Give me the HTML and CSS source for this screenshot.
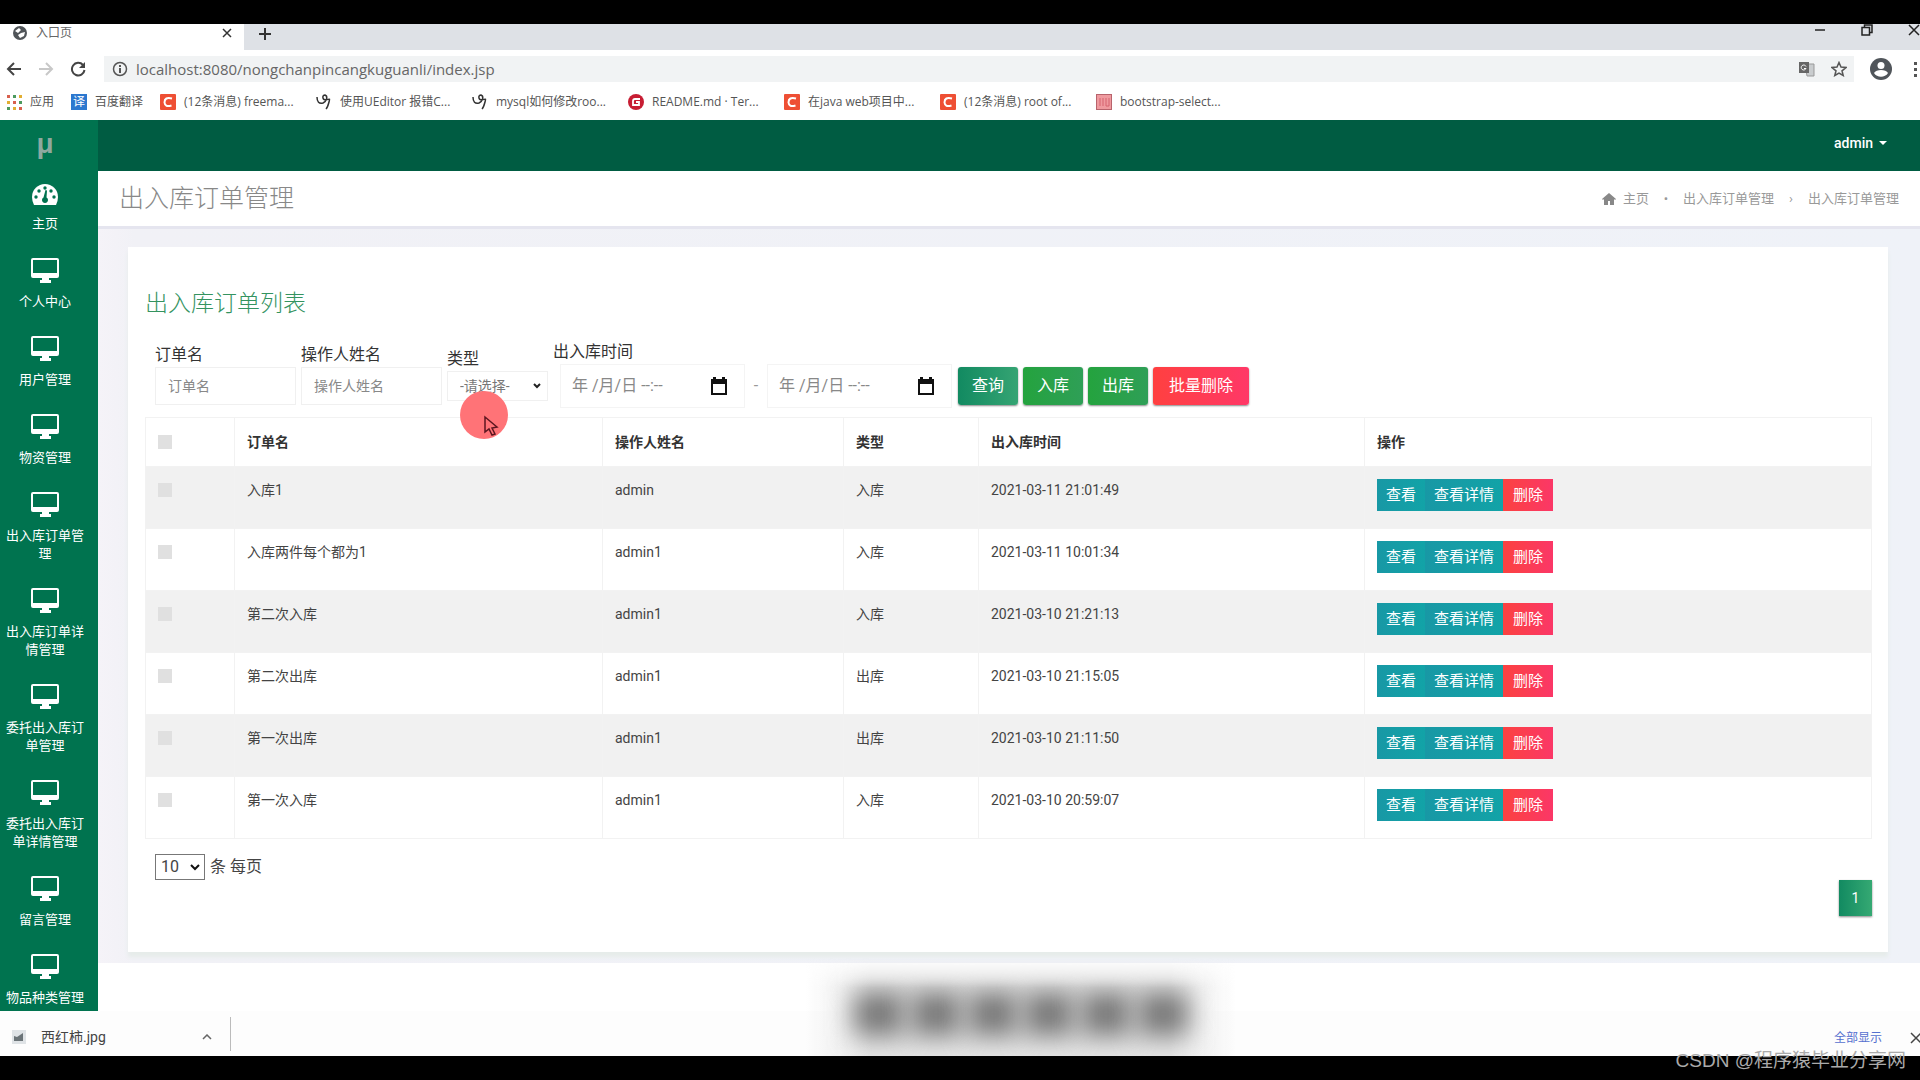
FILE: index.html
```html
<!DOCTYPE html>
<html lang="zh-CN">
<head>
<meta charset="utf-8">
<title>入口页</title>
<link rel="stylesheet" href="styles.css">
</head>
<body>
<svg class="defs" aria-hidden="true">
  <symbol id="monitor" viewBox="0 0 28 26"><path fill="currentColor" fill-rule="evenodd" d="M2 1h24a2 2 0 0 1 2 2v16a2 2 0 0 1-2 2h-8v2h2v3H9v-3h2v-2H2a2 2 0 0 1-2-2V3a2 2 0 0 1 2-2zm0 2v13h24V3z"/></symbol>
  <symbol id="calendar" viewBox="0 0 16 18"><path fill="#111" fill-rule="evenodd" d="M2 2V0h3v2h6V0h3v2h2v16H0V2zm0 5v9h12V7z"/></symbol>
  <symbol id="letter-c" viewBox="0 0 16 16"><rect width="16" height="16" rx="1" fill="#ee4f34"/><path d="M12 4.500Q4.500 2.500 4.500 8.500Q5 13.500 11.500 11.500" fill="none" stroke="#fff" stroke-width="2"/></symbol>
  <symbol id="swirl" viewBox="0 0 16 16"><path d="M1 3c0 5 2 7 6 6 4-2 5-7 2-8-3 0-3 5 1 5 4-1 4-2 3 2-1 4-2 6-3 7" fill="none" stroke="#333" stroke-width="1.500"/></symbol>
</svg>

<div class="band"></div>

<header class="browser">
  <div class="tabs">
    <div class="tab">
      <svg width="16" height="16" viewBox="0 0 16 16"><circle cx="8" cy="8" r="7" fill="#505458"/><path d="M3 6l4-3 2 2-3 3zM9 8l4-1-1 4-4 2-2-3z" fill="#fff"/></svg>
      <span class="tab-name">入口页</span>
      <button class="plain" aria-label="关闭标签"><svg width="10" height="10" viewBox="0 0 10 10"><path d="M1 1l8 8M9 1L1 9" stroke="#333" stroke-width="1.500"/></svg></button>
    </div>
    <button class="plain new-tab" aria-label="新标签"><svg width="14" height="14" viewBox="0 0 14 14"><path d="M7 1v12M1 7h12" stroke="#333" stroke-width="2"/></svg></button>
    <div class="window-buttons">
      <button class="plain" aria-label="最小化"><svg width="12" height="12" viewBox="0 0 12 12"><path d="M1 6h10" stroke="#222" stroke-width="1.500"/></svg></button>
      <button class="plain" aria-label="还原"><svg width="12" height="12" viewBox="0 0 12 12"><path d="M1 3.500h7.500V11H1zM3.500 3V1H11v7.500H9" fill="none" stroke="#222" stroke-width="1.500"/></svg></button>
      <button class="plain" aria-label="关闭"><svg width="12" height="12" viewBox="0 0 12 12"><path d="M1 1l10 10M11 1L1 11" stroke="#222" stroke-width="1.500"/></svg></button>
    </div>
  </div>
  <div class="toolbar">
    <button class="plain" aria-label="后退"><svg width="16" height="16" viewBox="0 0 16 16"><path d="M15 8H2M8 2L2 8l6 6" fill="none" stroke="#444" stroke-width="2"/></svg></button>
    <button class="plain" aria-label="前进"><svg width="16" height="16" viewBox="0 0 16 16"><path d="M1 8h13M8 2l6 6-6 6" fill="none" stroke="#c8c8c8" stroke-width="2"/></svg></button>
    <button class="plain" aria-label="刷新"><svg width="16" height="16" viewBox="0 0 16 16"><path d="M13 4a6.300 6.300 0 1 0 1.500 5" fill="none" stroke="#444" stroke-width="2"/><path d="M15 1v6H9z" fill="#444"/></svg></button>
    <div class="address">
      <svg width="16" height="16" viewBox="0 0 16 16"><circle cx="8" cy="8" r="6.500" fill="none" stroke="#555" stroke-width="1.500"/><path d="M8 7v5M8 4v2" stroke="#555" stroke-width="2"/></svg>
      <input class="url" aria-label="地址" value="localhost:8080/nongchanpincangkuguanli/index.jsp">
      <svg width="16" height="16" viewBox="0 0 16 16"><path d="M6 3h9v12H8z" fill="#c9ccce" stroke="#999"/><rect x="0" y="1" width="10" height="11" fill="#666"/><path d="M7 5.500a2.500 2.500 0 1 0 0 2H5" stroke="#fff" fill="none"/></svg>
      <svg width="16" height="16" viewBox="0 0 16 16"><path d="M8 1.500l2 4.500 5 .5-4 3.300 1.200 4.700L8 12l-4.200 2.500L5 9.800 1 6.500 6 6z" fill="none" stroke="#555" stroke-width="1.500"/></svg>
    </div>
    <svg width="22" height="22" viewBox="0 0 22 22"><circle cx="11" cy="11" r="11" fill="#50555a"/><circle cx="11" cy="7.500" r="3.500" fill="#fff"/><path d="M4 15c2-4 12-4 14 0-3 5-11 5-14 0z" fill="#fff"/></svg>
    <svg class="dots" width="4" height="16" viewBox="0 0 4 16"><path d="M0 1h3v3H0zM0 7h3v3H0zM0 13h3v3H0z" fill="#555"/></svg>
  </div>
  <nav class="bookmarks">
    <a href="#" class="apps"><svg width="16" height="16" viewBox="0 0 16 16"><path d="M1 1h3v3H1zM7 7h3v3H7zM13 13h3v3h-3z" fill="#d8604e"/><path d="M7 1h3v3H7zM13 7h3v3h-3zM1 13h3v3H1z" fill="#4c9a5e"/><path d="M13 1h3v3h-3zM1 7h3v3H1zM7 13h3v3H7z" fill="#e2ae32"/></svg>应用</a>
    <a href="#" class="fanyi"><span class="yi">译</span>百度翻译</a>
    <a href="#"><svg width="16" height="16"><use href="#letter-c"/></svg>(12条消息) freema...</a>
    <a href="#"><svg width="16" height="16"><use href="#swirl"/></svg>使用UEditor 报错C...</a>
    <a href="#"><svg width="16" height="16"><use href="#swirl"/></svg>mysql如何修改roo...</a>
    <a href="#"><svg width="16" height="16" viewBox="0 0 16 16"><circle cx="8" cy="8" r="8" fill="#c71d33"/><path d="M12 5H7Q5 5 5 7v4h6V8H8" fill="none" stroke="#fff" stroke-width="1.800"/></svg>README.md · Ter...</a>
    <a href="#"><svg width="16" height="16"><use href="#letter-c"/></svg>在java web项目中...</a>
    <a href="#"><svg width="16" height="16"><use href="#letter-c"/></svg>(12条消息) root of...</a>
    <a href="#"><svg width="16" height="16" viewBox="0 0 16 16"><rect x=".5" y=".5" width="15" height="15" fill="#ef9a9f" stroke="#b8636c"/><path d="M4 4v8M7 4v8M10 4v8h3V4" fill="none" stroke="#d5636e"/></svg>bootstrap-select...</a>
  </nav>
</header>

<div class="app">
  <aside class="sidebar">
    <div class="logo">μ</div>
    <nav class="menu">
      <a href="#"><svg width="28" height="26" viewBox="0 0 28 26"><path fill="#fff" fill-rule="evenodd" d="M14 5A13 13 0 0 0 1 18q0 4 2 8h22q2-4 2-8A13 13 0 0 0 14 5z"/><g fill="#00734f"><circle cx="14" cy="9" r="1.700"/><circle cx="8" cy="12" r="1.700"/><circle cx="20" cy="12" r="1.700"/><circle cx="5" cy="18" r="1.700"/><circle cx="23" cy="18" r="1.700"/><path d="M14.500 11l1.500.5-.5 7a3 3 0 1 1-3 0z"/></g></svg><span>主页</span></a>
      <a href="#"><svg width="28" height="26"><use href="#monitor"/></svg><span>个人中心</span></a>
      <a href="#"><svg width="28" height="26"><use href="#monitor"/></svg><span>用户管理</span></a>
      <a href="#"><svg width="28" height="26"><use href="#monitor"/></svg><span>物资管理</span></a>
      <a href="#"><svg width="28" height="26"><use href="#monitor"/></svg><span>出入库订单管理</span></a>
      <a href="#"><svg width="28" height="26"><use href="#monitor"/></svg><span>出入库订单详情管理</span></a>
      <a href="#"><svg width="28" height="26"><use href="#monitor"/></svg><span>委托出入库订单管理</span></a>
      <a href="#"><svg width="28" height="26"><use href="#monitor"/></svg><span>委托出入库订单详情管理</span></a>
      <a href="#"><svg width="28" height="26"><use href="#monitor"/></svg><span>留言管理</span></a>
      <a href="#"><svg width="28" height="26"><use href="#monitor"/></svg><span>物品种类管理</span></a>
    </nav>
  </aside>

  <div class="page">
    <div class="topbar"><button class="user">admin<i class="caret"></i></button></div>
    <div class="page-head">
      <h1>出入库订单管理</h1>
      <nav class="crumbs">
        <a href="#"><svg width="14" height="12" viewBox="0 0 14 12"><path d="M7 0l7 6-1 1-1-1v6H8V8H6v4H2V6L1 7 0 6z" fill="#888"/></svg>主页</a>
        <span class="sep">•</span>
        <a href="#">出入库订单管理</a>
        <span class="sep">›</span>
        <span>出入库订单管理</span>
      </nav>
    </div>

    <main class="content">
      <section class="card">
        <h2>出入库订单列表</h2>
        <form class="filters">
          <div class="field"><label for="order">订单名</label><input id="order" class="control" placeholder="订单名"></div>
          <div class="field"><label for="operator">操作人姓名</label><input id="operator" class="control" placeholder="操作人姓名"></div>
          <div class="field kind"><label for="kind">类型</label><div class="pick"><select id="kind"><option>-请选择-</option></select><svg width="8" height="6" viewBox="0 0 8 6"><path d="M1 1l3 3 3-3" fill="none" stroke="#222" stroke-width="2"/></svg></div></div>
          <div class="field dates">
            <label for="from">出入库时间</label>
            <div class="range">
              <div class="date"><input id="from" placeholder="年 /月/日 --:--"><button type="button" class="plain" aria-label="选择日期"><svg width="16" height="18"><use href="#calendar"/></svg></button></div>
              <span class="dash">-</span>
              <div class="date"><input aria-label="结束时间" placeholder="年 /月/日 --:--"><button type="button" class="plain" aria-label="选择日期"><svg width="16" height="18"><use href="#calendar"/></svg></button></div>
            </div>
          </div>
          <div class="actions">
            <button type="button" class="btn teal">查询</button>
            <button type="button" class="btn green">入库</button>
            <button type="button" class="btn green">出库</button>
            <button type="button" class="btn red wide">批量删除</button>
          </div>
        </form>

        <table class="orders">
          <colgroup><col class="c-tick"><col class="c-name"><col class="c-user"><col class="c-kind"><col class="c-time"><col class="c-ops"></colgroup>
          <thead>
            <tr><th><input type="checkbox" aria-label="全选"></th><th>订单名</th><th>操作人姓名</th><th>类型</th><th>出入库时间</th><th>操作</th></tr>
          </thead>
          <tbody>
            <tr><td><input type="checkbox" aria-label="选择"></td><td>入库1</td><td>admin</td><td>入库</td><td>2021-03-11 21:01:49</td><td><div class="ops"><button>查看</button><button>查看详情</button><button class="del">删除</button></div></td></tr>
            <tr><td><input type="checkbox" aria-label="选择"></td><td>入库两件每个都为1</td><td>admin1</td><td>入库</td><td>2021-03-11 10:01:34</td><td><div class="ops"><button>查看</button><button>查看详情</button><button class="del">删除</button></div></td></tr>
            <tr><td><input type="checkbox" aria-label="选择"></td><td>第二次入库</td><td>admin1</td><td>入库</td><td>2021-03-10 21:21:13</td><td><div class="ops"><button>查看</button><button>查看详情</button><button class="del">删除</button></div></td></tr>
            <tr><td><input type="checkbox" aria-label="选择"></td><td>第二次出库</td><td>admin1</td><td>出库</td><td>2021-03-10 21:15:05</td><td><div class="ops"><button>查看</button><button>查看详情</button><button class="del">删除</button></div></td></tr>
            <tr><td><input type="checkbox" aria-label="选择"></td><td>第一次出库</td><td>admin1</td><td>出库</td><td>2021-03-10 21:11:50</td><td><div class="ops"><button>查看</button><button>查看详情</button><button class="del">删除</button></div></td></tr>
            <tr><td><input type="checkbox" aria-label="选择"></td><td>第一次入库</td><td>admin1</td><td>入库</td><td>2021-03-10 20:59:07</td><td><div class="ops"><button>查看</button><button>查看详情</button><button class="del">删除</button></div></td></tr>
          </tbody>
        </table>

        <div class="page-size"><div class="pick size"><select id="size"><option>10</option></select><svg width="10" height="7" viewBox="0 0 10 7"><path d="M1 1l4 4 4-4" fill="none" stroke="#111" stroke-width="2"/></svg></div><label for="size">条 每页</label></div>
        <div class="pager"><button>1</button></div>
      </section>
    </main>
  </div>
</div>

<footer class="downloads">
  <div class="file">
    <svg width="14" height="14" viewBox="0 0 14 14"><rect width="14" height="14" fill="#dfe3e6"/><path d="M2 11V6l3 1 6-4v8z" fill="#6b7478"/></svg>
    <span class="file-name">西红柿.jpg</span>
    <button class="plain" aria-label="更多"><svg width="10" height="6" viewBox="0 0 10 6"><path d="M1 5l4-4 4 4" fill="none" stroke="#666" stroke-width="1.500"/></svg></button>
  </div>
  <a href="#" class="show-all">全部显示</a>
  <button class="plain" aria-label="关闭下载栏"><svg width="10" height="12" viewBox="0 0 10 12"><path d="M1 1l10 10M11 1L1 11" stroke="#444" stroke-width="1.500"/></svg></button>
</footer>
<div class="band credit">CSDN @程序猿毕业分享网</div>

<div class="smudge" aria-hidden="true"><i></i><i></i><i></i><i></i><i></i><i></i></div>
<svg class="pointer" width="48" height="48" viewBox="0 0 48 48" aria-hidden="true"><circle cx="24" cy="24" r="24" fill="#ff7377"/><path d="M25 26v15l4-3 3 6 3-1-3-6 5-1z" fill="#ff7377" stroke="#5d1620" stroke-width="1.500"/></svg>
</body>
</html>
```
FILE: styles.css
```css
* { box-sizing: border-box; }
body {
  margin: 0;
  min-height: 100vh;
  position: relative;
  display: flex;
  flex-direction: column;
  overflow-x: hidden;
  background: #fff;
  color: #444;
  font: 14px/20px Roboto, "Noto Sans CJK SC", sans-serif;
}
a { color: inherit; text-decoration: none; }
button, input, select { font: inherit; color: inherit; }
svg { flex: none; display: block; }
.defs { position: absolute; width: 0; height: 0; }
.plain { border: 0; padding: 0; background: none; display: block; }
.band { height: 24px; background: #000; }

/* browser window */
.browser { font-family: "Open Sans", "Noto Sans CJK SC", sans-serif; }
.tabs { display: flex; height: 26px; background: #dee1e6; }
.tab { display: flex; align-items: center; width: 244px; padding: 0 12px 8px; background: #fff; font-size: 12px; }
.tab-name { flex: 1; margin-left: 8px; color: #666; }
.new-tab { margin: 3px 0 0 14px; align-self: flex-start; }
.window-buttons { display: flex; gap: 35px; margin-left: auto; align-items: flex-start; }
.toolbar { display: flex; align-items: center; height: 38px; padding-left: 6px; gap: 16px; }
.address { flex: 1; display: flex; align-items: center; gap: 16px; height: 26px; margin-left: 2px; padding: 0 7px 0 8px; background: #f1f3f4; }
.url { flex: 1; border: 0; padding: 0; margin-left: -8px; background: none; font-size: 15px; color: #666; }
.dots { margin: 0 2px 0 6px; }
.bookmarks { display: flex; height: 32px; padding: 4px 0 9px 6px; font-size: 12px; line-height: 18px; color: #555; }
.bookmarks a { display: flex; align-items: center; gap: 8px; width: 156px; white-space: nowrap; }
.bookmarks .apps { width: 65px; }
.bookmarks .fanyi { width: 89px; }
.yi { width: 16px; height: 16px; background: #2c78cf; color: #fff; text-align: center; line-height: 16px; }

/* application frame */
.app { flex: 1; display: flex; }
.sidebar { width: 98px; padding-right: 8px; background: #00734f; color: #fff; }
.logo { height: 47px; padding-top: 6px; text-align: center; font: bold 28px/36px "Liberation Sans", sans-serif; color: #8fa99f; }
.menu a { display: flex; flex-direction: column; align-items: center; gap: 10px; padding: 12px 4px; text-align: center; font-size: 13px; line-height: 18px; }
.menu a:last-child { padding-bottom: 4px; }
.page { flex: 1; min-width: 0; }
.topbar { display: flex; justify-content: flex-end; align-items: center; height: 51px; padding: 0 33px 6px; background: #005c42; }
.user { display: flex; align-items: center; gap: 6px; border: 0; padding: 0; background: none; color: #fff; font-weight: 500; }
.caret { border: 4px solid transparent; border-top-color: #fff; border-bottom: 0; }
.page-head { display: flex; justify-content: space-between; align-items: center; height: 58px; padding: 0 21px; border-bottom: 3px solid #e5e5ef; }
h1 { margin: 0; font-size: 25px; line-height: 36px; font-weight: 300; color: #888; }
.crumbs { display: flex; align-items: center; font-size: 13px; color: #999; }
.crumbs a { display: flex; align-items: center; gap: 7px; }
.sep { width: 34px; text-align: center; }
.content { padding: 18px 32px 11px 30px; background: linear-gradient(90deg, #f5f3f8, #f1f1f6 2%, #eff2f8); }
.card { padding: 42px 16px 36px 17px; background: #fff; box-shadow: 0 5px 4px #e6ecea; }
h2 { margin: 0 0 21px; font-size: 23px; line-height: 30px; font-weight: 300; color: #34935f; }

/* search form */
.filters { display: flex; align-items: flex-end; gap: 5px; padding-left: 10px; margin-bottom: 9px; font-size: 16px; }
.field { width: 141px; margin-bottom: 3px; color: #333; }
.field label { display: block; line-height: 24px; }
.control { display: block; width: 100%; height: 38px; padding: 0 12px; border: 1px solid #f0f0f0; background: #fff; font-size: 14px; }
.filters ::placeholder { color: #888; opacity: 1; }
.pick { position: relative; }
.pick select { width: 100%; height: 100%; appearance: none; border: 1px solid #f0f0f0; background: #fff; }
.pick svg { position: absolute; right: 7px; top: 50%; margin-top: -3px; pointer-events: none; }
.kind { width: 101px; margin-bottom: 7px; }
.kind .pick { height: 30px; }
.kind select { padding: 0 12px; font-size: 14px; color: #777; }
.dates { width: 400px; margin-bottom: 0; }
.range { display: flex; padding-left: 7px; }
.date { display: flex; align-items: center; width: 185px; height: 44px; padding: 0 17px 0 11px; border: 1px solid #f4f4f4; }
.date input { flex: 1; min-width: 0; border: 0; padding: 0; background: none; }
.dash { width: 22px; line-height: 44px; text-align: center; color: #999; }
.actions { display: flex; gap: 5px; margin-bottom: 3px; }
.btn { width: 60px; height: 38px; border: 0; border-radius: 3px; padding: 0; color: #fff; box-shadow: 0 1px 2px #888; }
.wide { width: 96px; }
.teal { background: linear-gradient(90deg, #128a61, #35a473); }
.green { background: linear-gradient(90deg, #24a33e, #2f9f57); }
.red { background: linear-gradient(90deg, #ff4040, #ff3867); }

/* order table */
.orders { width: 100%; table-layout: fixed; border-collapse: collapse; font-size: 14px; }
.c-tick { width: 89px; }
.c-name { width: 368px; }
.c-user { width: 241px; }
.c-kind { width: 135px; }
.c-time { width: 386px; }
.orders th, .orders td { padding: 0 12px; border: 1px solid #f2f2f2; text-align: left; }
.orders th { height: 49px; font-weight: 700; color: #333; }
.orders td { height: 62px; padding: 12px 12px 16px; vertical-align: top; line-height: 22px; }
.orders tbody tr:nth-child(odd) { background: #f1f1f1; }
.orders input { appearance: none; display: block; width: 14px; height: 14px; margin: 4px 0; background: #e0e0e0; }
.ops { display: flex; }
.ops button { height: 32px; border: 0; padding: 0 9px; color: #fff; font-size: 15px; background: linear-gradient(90deg, #1898a5, #12a3a7); }
.ops .del { padding: 0 10px; background: linear-gradient(90deg, #fb4240, #fb3767); }

.page-size { display: flex; align-items: center; gap: 5px; height: 26px; margin: 15px 0 0 10px; font-size: 16px; }
.size { width: 50px; height: 26px; }
.size select { padding: 0 5px; border-color: #777; }
.size svg { right: 5px; }
.pager { display: flex; justify-content: flex-end; }
.pager button { width: 33px; height: 36px; border: 0; padding: 0; color: #fff; background: linear-gradient(90deg, #128a61, #35a973); box-shadow: 0 1px 2px #888; }

/* download bar */
.downloads { display: flex; align-items: center; height: 45px; background: #fdfdfd; font-size: 14px; }
.file { display: flex; align-items: center; width: 231px; height: 34px; padding: 6px 18px 0 12px; border-right: 1px solid #bbb; }
.file-name { flex: 1; margin-left: 15px; line-height: 24px; }
.show-all { margin: 8px 28px 0 auto; font-size: 12px; color: #5570cf; }
.downloads > .plain { margin-top: 8px; }
.credit { padding-right: 14px; text-align: right; font: 19px/10px "Liberation Sans", "Noto Sans CJK SC", sans-serif; color: #aaa; }

/* blurred caption and mouse pointer float over the page */
.smudge { position: absolute; left: 50%; bottom: 24px; width: 430px; height: 98px; margin-left: -154px; padding: 34px 48px 0; display: flex; justify-content: space-between; overflow: hidden; background: linear-gradient(90deg, transparent, #e6e6e6 15%, #e6e6e6 85%, transparent); mask-image: linear-gradient(transparent, #000 30%); }
.smudge i { width: 50px; height: 44px; background: #777; filter: blur(13px); }
.pointer { position: absolute; left: 460px; top: 391px; }
```
